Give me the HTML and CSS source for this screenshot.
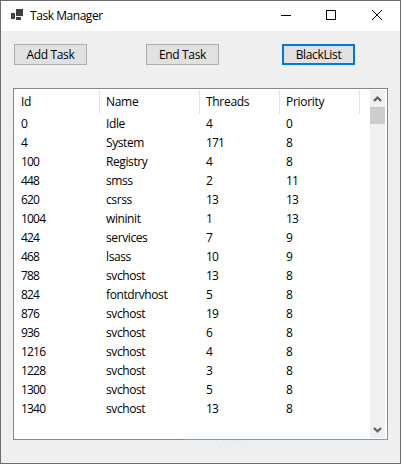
FILE: index.html
```
<!DOCTYPE html>
<html lang="en">
<head>
<meta charset="utf-8">
<title>Task Manager</title>
<link rel="stylesheet" href="styles.css">
</head>
<body>
<div class="window">
  <header class="titlebar">
    <svg class="app-icon" width="12" height="11" viewBox="0 0 12 11" shape-rendering="crispEdges"><path fill="#3f3f3f" d="M0 4h4v6H0zM5 0h7v7H5zM5 8h5v3H5z"/></svg>
    <h1 class="title">Task Manager</h1>
    <svg class="controls" width="104" height="12" viewBox="0 0 104 12" fill="none" stroke="#000"><path d="M0 6.5h10M45.5 1.5h9v9h-9z" shape-rendering="crispEdges"/><path d="M91 1l10 10M101 1L91 11"/></svg>
  </header>
  <div class="toolbar">
    <button class="btn">Add Task</button>
    <button class="btn">End Task</button>
    <button class="btn focused">BlackList</button>
  </div>
  <main class="list">
    <div class="grid">
      <div class="row head"><span>Id</span><span>Name</span><span>Threads</span><span>Priority</span></div>
      <div class="row"><span>0</span><span>Idle</span><span>4</span><span>0</span></div>
      <div class="row"><span>4</span><span>System</span><span>171</span><span>8</span></div>
      <div class="row"><span>100</span><span>Registry</span><span>4</span><span>8</span></div>
      <div class="row"><span>448</span><span>smss</span><span>2</span><span>11</span></div>
      <div class="row"><span>620</span><span>csrss</span><span>13</span><span>13</span></div>
      <div class="row"><span>1004</span><span>wininit</span><span>1</span><span>13</span></div>
      <div class="row"><span>424</span><span>services</span><span>7</span><span>9</span></div>
      <div class="row"><span>468</span><span>lsass</span><span>10</span><span>9</span></div>
      <div class="row"><span>788</span><span>svchost</span><span>13</span><span>8</span></div>
      <div class="row"><span>824</span><span>fontdrvhost</span><span>5</span><span>8</span></div>
      <div class="row"><span>876</span><span>svchost</span><span>19</span><span>8</span></div>
      <div class="row"><span>936</span><span>svchost</span><span>6</span><span>8</span></div>
      <div class="row"><span>1216</span><span>svchost</span><span>4</span><span>8</span></div>
      <div class="row"><span>1228</span><span>svchost</span><span>3</span><span>8</span></div>
      <div class="row"><span>1300</span><span>svchost</span><span>5</span><span>8</span></div>
      <div class="row"><span>1340</span><span>svchost</span><span>13</span><span>8</span></div>
    </div>
    <div class="scrollbar">
      <svg width="15" height="17" viewBox="0 0 15 17" fill="none" stroke="#606060" stroke-width="2.2"><path d="M4 11l3.5-3.5L11 11"/></svg>
      <div class="thumb"></div>
      <svg class="down" width="15" height="17" viewBox="0 0 15 17" fill="none" stroke="#606060" stroke-width="2.2"><path d="M4 7l3.5 3.5L11 7"/></svg>
    </div>
  </main>
  <div class="ghost">Окно</div>
</div>
</body>
</html>
```
FILE: styles.css
```
* { box-sizing: border-box; }
body { margin: 0; color: #000; font: 12px/16px "Open Sans", "Noto Sans", sans-serif; }
.window { position: relative; width: 401px; height: 464px; border: 1px solid #6d6d6d; background: #efefef; overflow: hidden; }
.titlebar { display: flex; height: 30px; background: #fff; }
.app-icon { margin: 8px 7px 0 10px; }
.title { margin: 6px 0 0; font-size: 12px; line-height: 18px; font-weight: 400; letter-spacing: -0.45px; white-space: nowrap; }
.controls { margin: 8px 15px 0 auto; }
.toolbar { display: flex; padding: 13px 0 0 13px; height: 57px; }
.btn { flex: none; width: 73px; height: 21px; margin: 0 59px 0 0; padding: 0; border: 1px solid #adadad; background: #e1e1e1; color: #000; font: 12px/17px "Open Sans", "Noto Sans", sans-serif; letter-spacing: -0.35px; white-space: nowrap; }
.btn:nth-child(2) { margin-right: 63px; }
.focused { border: 2px solid #0078d7; line-height: 15px; }
.list { display: flex; justify-content: space-between; width: 375px; height: 352px; margin-left: 12px; padding: 1px 2px 1px 0; border: 1px solid #828790; background: #fff; }
.grid { width: 346px; letter-spacing: -0.3px; }
.row { display: grid; grid-template-columns: 86px 100px 80px 80px; height: 19px; line-height: 19px; }
.row span { padding-left: 6px; white-space: nowrap; }
.row span:first-child { padding-left: 7px; }
.row:not(.head) span:first-child, .row:not(.head) span:nth-child(n+3) { letter-spacing: -0.8px; }
.row:not(.head) span:nth-child(2) { letter-spacing: -0.4px; }
.head { height: 24px; line-height: 23px; }
.head span { border-right: 1px solid #e5e5e5; }
.scrollbar { display: flex; flex-direction: column; width: 15px; background: #f0f0f0; }
.thumb { height: 17px; background: #cdcdcd; }
.down { margin-top: auto; }
.ghost { position: absolute; left: 182px; top: 430px; width: 205px; height: 23px; padding-left: 32px; line-height: 21px; color: rgba(90, 90, 110, 0.06); background: rgba(225, 235, 250, 0.16); }
```
